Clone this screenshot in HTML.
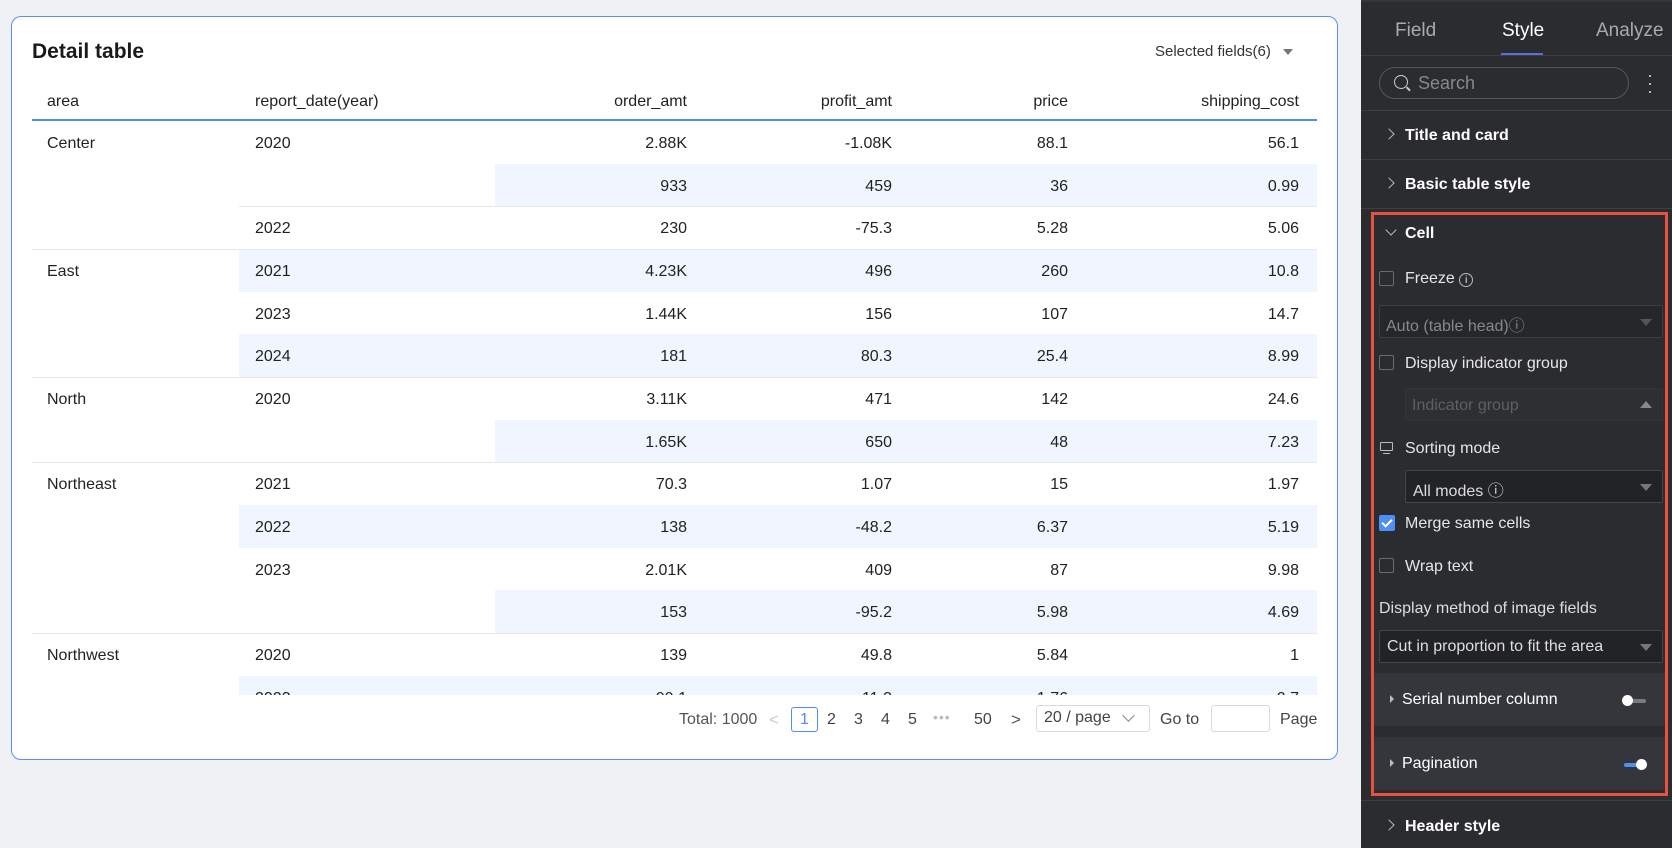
<!DOCTYPE html>
<html><head><meta charset="utf-8"><style>
*{box-sizing:border-box;margin:0;padding:0}
body{width:1672px;height:848px;background:#f0f1f4;font-family:"Liberation Sans",sans-serif;position:relative;overflow:hidden;color:#1f1f1f}
.card{position:absolute;left:11px;top:16px;width:1327px;height:744px;background:#fff;border:1px solid #5b8ff9;border-radius:10px}
.a{position:absolute;white-space:nowrap}
.t{font-size:16px;color:#222}
.row{position:absolute;left:32px;width:1285px;height:43px}
.sh{position:absolute;top:0;bottom:0;right:0;background:#f0f5ff}
.ln{position:absolute;top:0;right:0;height:1px;background:#e5e7ec}
.c{position:absolute;top:14px;font-size:16px;color:#222}
.r{text-align:right}
.p{position:absolute;left:1361px;top:0;width:311px;height:848px;background:#2b2c30;color:#e6e6e6}
.pl{position:absolute;left:0;right:0;height:1px;background:#3e3f44}
.pt{position:absolute;font-size:16px;white-space:nowrap}
.b{font-weight:bold;color:#fff}
.cb{position:absolute;width:15px;height:15px;border:1px solid #6a6b70;border-radius:2px}
.dd{position:absolute;height:33px;border:1px solid #3d3e43;background:#26272b;border-radius:2px}
.tri{position:absolute;right:10px;top:13px;width:0;height:0;border-left:6px solid transparent;border-right:6px solid transparent;border-top:7px solid #777}
.chev{position:absolute;width:8px;height:8px;border-right:1.5px solid #bbb;border-bottom:1.5px solid #bbb}
</style></head><body>
<div class="card"></div>
<div class="a" style="left:32px;top:40px;font-size:21px;font-weight:bold;color:#1a1a1a">Detail table</div>
<div class="a" style="left:1155px;top:43px;font-size:15px;color:#333">Selected fields(6)</div>
<div class="a" style="left:1283px;top:49px;border-left:5px solid transparent;border-right:5px solid transparent;border-top:6px solid #777"></div>
<div class="a t" style="left:47px;top:93px">area</div>
<div class="a t" style="left:255px;top:93px">report_date(year)</div>
<div class="a t r" style="right:985px;top:93px">order_amt</div>
<div class="a t r" style="right:780px;top:93px">profit_amt</div>
<div class="a t r" style="right:604px;top:93px">price</div>
<div class="a t r" style="right:373px;top:93px">shipping_cost</div>
<div class="a" style="left:32px;top:119px;width:1285px;height:2px;background:#4d8ff5"></div>
<div class="a" style="left:0;top:121px;width:1340px;height:574px;overflow:hidden">
<div style="position:absolute;left:0;top:-121px;width:1340px;height:848px" id="tb">
<div class="row" style="top:121px"><div class="c" style="left:15px">Center</div><div class="c" style="left:223px">2020</div><div class="c r" style="right:630px">2.88K</div><div class="c r" style="right:425px">-1.08K</div><div class="c r" style="right:249px">88.1</div><div class="c r" style="right:18px">56.1</div></div>
<div class="row" style="top:163.6px"><div class="sh" style="left:463px"></div><div class="c r" style="right:630px">933</div><div class="c r" style="right:425px">459</div><div class="c r" style="right:249px">36</div><div class="c r" style="right:18px">0.99</div></div>
<div class="row" style="top:206.3px"><div class="ln" style="left:207px"></div><div class="c" style="left:223px">2022</div><div class="c r" style="right:630px">230</div><div class="c r" style="right:425px">-75.3</div><div class="c r" style="right:249px">5.28</div><div class="c r" style="right:18px">5.06</div></div>
<div class="row" style="top:249px"><div class="sh" style="left:207px"></div><div class="ln" style="left:0"></div><div class="c" style="left:15px">East</div><div class="c" style="left:223px">2021</div><div class="c r" style="right:630px">4.23K</div><div class="c r" style="right:425px">496</div><div class="c r" style="right:249px">260</div><div class="c r" style="right:18px">10.8</div></div>
<div class="row" style="top:291.6px"><div class="c" style="left:223px">2023</div><div class="c r" style="right:630px">1.44K</div><div class="c r" style="right:425px">156</div><div class="c r" style="right:249px">107</div><div class="c r" style="right:18px">14.7</div></div>
<div class="row" style="top:334.3px"><div class="sh" style="left:207px"></div><div class="c" style="left:223px">2024</div><div class="c r" style="right:630px">181</div><div class="c r" style="right:425px">80.3</div><div class="c r" style="right:249px">25.4</div><div class="c r" style="right:18px">8.99</div></div>
<div class="row" style="top:377px"><div class="ln" style="left:0"></div><div class="c" style="left:15px">North</div><div class="c" style="left:223px">2020</div><div class="c r" style="right:630px">3.11K</div><div class="c r" style="right:425px">471</div><div class="c r" style="right:249px">142</div><div class="c r" style="right:18px">24.6</div></div>
<div class="row" style="top:419.6px"><div class="sh" style="left:463px"></div><div class="c r" style="right:630px">1.65K</div><div class="c r" style="right:425px">650</div><div class="c r" style="right:249px">48</div><div class="c r" style="right:18px">7.23</div></div>
<div class="row" style="top:462.3px"><div class="ln" style="left:0"></div><div class="c" style="left:15px">Northeast</div><div class="c" style="left:223px">2021</div><div class="c r" style="right:630px">70.3</div><div class="c r" style="right:425px">1.07</div><div class="c r" style="right:249px">15</div><div class="c r" style="right:18px">1.97</div></div>
<div class="row" style="top:505px"><div class="sh" style="left:207px"></div><div class="c" style="left:223px">2022</div><div class="c r" style="right:630px">138</div><div class="c r" style="right:425px">-48.2</div><div class="c r" style="right:249px">6.37</div><div class="c r" style="right:18px">5.19</div></div>
<div class="row" style="top:547.6px"><div class="c" style="left:223px">2023</div><div class="c r" style="right:630px">2.01K</div><div class="c r" style="right:425px">409</div><div class="c r" style="right:249px">87</div><div class="c r" style="right:18px">9.98</div></div>
<div class="row" style="top:590.3px"><div class="sh" style="left:463px"></div><div class="c r" style="right:630px">153</div><div class="c r" style="right:425px">-95.2</div><div class="c r" style="right:249px">5.98</div><div class="c r" style="right:18px">4.69</div></div>
<div class="row" style="top:633px"><div class="ln" style="left:0"></div><div class="c" style="left:15px">Northwest</div><div class="c" style="left:223px">2020</div><div class="c r" style="right:630px">139</div><div class="c r" style="right:425px">49.8</div><div class="c r" style="right:249px">5.84</div><div class="c r" style="right:18px">1</div></div>
<div class="row" style="top:675.6px"><div class="sh" style="left:207px"></div><div class="c" style="left:223px">2023</div><div class="c r" style="right:630px">99.1</div><div class="c r" style="right:425px">11.3</div><div class="c r" style="right:249px">1.76</div><div class="c r" style="right:18px">0.7</div></div>
</div></div>
<!-- pagination -->
<div class="a" style="left:679px;top:711px;font-size:16px;color:#555">Total: 1000</div>
<div class="a" style="left:769px;top:710px;font-size:17px;color:#ccc">&lt;</div>
<div class="a" style="left:791px;top:707px;width:27px;height:25px;border:1px solid #4d8ff5;border-radius:3px;color:#4d8ff5;font-size:16px;text-align:center;line-height:23px">1</div>
<div class="a" style="left:827px;top:711px;font-size:16px;color:#444">2</div>
<div class="a" style="left:854px;top:711px;font-size:16px;color:#444">3</div>
<div class="a" style="left:881px;top:711px;font-size:16px;color:#444">4</div>
<div class="a" style="left:908px;top:711px;font-size:16px;color:#444">5</div>
<div class="a" style="left:933px;top:709px;font-size:14px;color:#bbb;letter-spacing:1px">•••</div>
<div class="a" style="left:974px;top:711px;font-size:16px;color:#444">50</div>
<div class="a" style="left:1011px;top:710px;font-size:17px;color:#555">&gt;</div>
<div class="a" style="left:1036px;top:705px;width:114px;height:27px;border:1px solid #d9d9d9;border-radius:3px;font-size:16px;color:#444;padding:3px 7px">20 / page</div>
<div class="a" style="left:1124px;top:711px;width:9px;height:9px;border-right:1.5px solid #888;border-bottom:1.5px solid #888;transform:rotate(45deg)"></div>
<div class="a" style="left:1160px;top:711px;font-size:16px;color:#444">Go to</div>
<div class="a" style="left:1211px;top:705px;width:59px;height:27px;border:1px solid #d9d9d9;border-radius:3px"></div>
<div class="a" style="left:1280px;top:711px;font-size:16px;color:#444">Page</div>

<!-- panel -->
<div class="p">
<div class="pl" style="top:0;height:2px;background:#35363a"></div>
<div class="pt" style="left:34px;top:20px;font-size:19px;color:#aaa">Field</div>
<div class="pt" style="left:141px;top:20px;font-size:19px;color:#fff">Style</div>
<div class="pt" style="left:235px;top:20px;font-size:19px;color:#aaa">Analyze</div>
<div class="pl" style="top:55px"></div>
<div class="a" style="left:140px;top:53px;width:42px;height:2px;background:#5b6ee0"></div>
<div class="a" style="left:18px;top:67px;width:250px;height:32px;border:1px solid #55565b;border-radius:16px"></div>
<div class="a" style="left:33px;top:75px;width:14px;height:14px;border:1.5px solid #ccc;border-radius:50%"></div>
<div class="a" style="left:45px;top:88px;width:5px;height:1.5px;background:#ccc;transform:rotate(45deg)"></div>
<div class="pt" style="left:57px;top:73px;font-size:18px;color:#888">Search</div>
<div class="pt" style="left:286px;top:71px;font-size:18px;color:#ccc;line-height:8px">·<br>·<br>·</div>
<div class="pl" style="top:110px"></div>
<div class="chev" style="left:24px;top:130px;transform:rotate(-45deg)"></div>
<div class="pt b" style="left:44px;top:127px">Title and card</div>
<div class="pl" style="top:159px"></div>
<div class="chev" style="left:24px;top:179px;transform:rotate(-45deg)"></div>
<div class="pt b" style="left:44px;top:176px">Basic table style</div>
<div class="pl" style="top:208px"></div>
<div class="a" style="left:10px;top:212px;width:297px;height:584px;border:3px solid #e8503f"></div>
<div class="chev" style="left:26px;top:226px;transform:rotate(45deg)"></div>
<div class="pt b" style="left:44px;top:225px">Cell</div>
<div class="cb" style="left:18px;top:271px"></div>
<div class="pt" style="left:44px;top:270px">Freeze <span style="border:1px solid #bbb;border-radius:50%;display:inline-block;width:14px;height:14px;text-align:center;line-height:13px;font-size:10px">i</span></div>
<div class="dd" style="left:18px;top:305px;width:284px"><span class="pt" style="left:6px;top:6px;color:#888">Auto (table head)ⓘ</span><div class="tri" style="border-top-color:#555"></div></div>
<div class="cb" style="left:18px;top:355px"></div>
<div class="pt" style="left:44px;top:355px">Display indicator group</div>
<div class="dd" style="left:44px;top:388px;width:258px;border-color:#333438;background:#2e2f33"><span class="pt" style="left:6px;top:8px;color:#5e5f64">Indicator group</span><div class="tri" style="border-top:none;border-bottom:7px solid #888;top:12px"></div></div>
<div class="a" style="left:19px;top:442px;width:13px;height:9px;border:1.3px solid #bbb;border-radius:1px"></div>
<div class="a" style="left:22px;top:453px;width:7px;height:1.3px;background:#bbb"></div>
<div class="pt" style="left:44px;top:440px">Sorting mode</div>
<div class="dd" style="left:44px;top:470px;width:258px;background:#222327;border-color:#44454a"><span class="pt" style="left:7px;top:6px;color:#ddd">All modes ⓘ</span><div class="tri"></div></div>
<div class="a" style="left:18px;top:515px;width:16px;height:16px;background:#4d8ff5;border-radius:2px"></div>
<div class="a" style="left:23px;top:517px;width:6px;height:10px;border-right:2px solid #fff;border-bottom:2px solid #fff;transform:rotate(45deg)"></div>
<div class="pt" style="left:44px;top:515px">Merge same cells</div>
<div class="cb" style="left:18px;top:558px"></div>
<div class="pt" style="left:44px;top:558px">Wrap text</div>
<div class="pt" style="left:18px;top:600px;color:#ddd">Display method of image fields</div>
<div class="dd" style="left:18px;top:630px;width:284px;background:#222327;border-color:#44454a"><span class="pt" style="left:7px;top:7px;color:#ddd">Cut in proportion to fit the area</span><div class="tri"></div></div>
<div class="a" style="left:13px;top:673px;width:291px;height:53px;background:#35363b"></div>
<div class="a" style="left:29px;top:695px;border-top:4px solid transparent;border-bottom:4px solid transparent;border-left:4px solid #bbb"></div>
<div class="pt" style="left:41px;top:691px;color:#fff">Serial number column</div>
<div class="a" style="left:263px;top:699px;width:22px;height:4px;background:#777a85;border-radius:2px"></div>
<div class="a" style="left:261px;top:695px;width:11px;height:11px;background:#fff;border-radius:50%"></div>
<div class="a" style="left:13px;top:737px;width:291px;height:53px;background:#35363b"></div>
<div class="a" style="left:29px;top:759px;border-top:4px solid transparent;border-bottom:4px solid transparent;border-left:4px solid #bbb"></div>
<div class="pt" style="left:41px;top:755px;color:#fff">Pagination</div>
<div class="a" style="left:263px;top:763px;width:22px;height:4px;background:#4d8ff5;border-radius:2px"></div>
<div class="a" style="left:275px;top:759px;width:11px;height:11px;background:#fff;border-radius:50%"></div>
<div class="pl" style="top:800px"></div>
<div class="chev" style="left:24px;top:821px;transform:rotate(-45deg)"></div>
<div class="pt b" style="left:44px;top:818px">Header style</div>
</div>
</body></html>
